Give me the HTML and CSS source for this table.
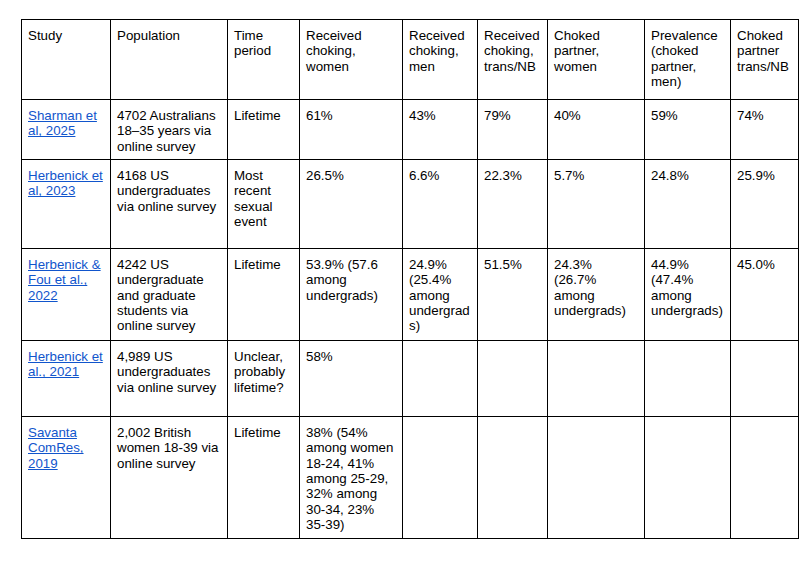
FILE: index.html
```html
<!DOCTYPE html>
<html lang="en">
<head>
<meta charset="utf-8">
<title>Choking prevalence studies</title>
<link rel="stylesheet" href="styles.css">
</head>
<body>
<div class="table">
  <div class="cell">Study</div>
  <div class="cell">Population</div>
  <div class="cell">Time period</div>
  <div class="cell">Received choking, women</div>
  <div class="cell">Received choking, men</div>
  <div class="cell">Received choking, trans/NB</div>
  <div class="cell">Choked partner, women</div>
  <div class="cell">Prevalence (choked partner, men)</div>
  <div class="cell">Choked partner trans/NB</div>

  <div class="cell"><a href="#">Sharman et al, 2025</a></div>
  <div class="cell">4702 Australians 18–35 years via online survey</div>
  <div class="cell">Lifetime</div>
  <div class="cell">61%</div>
  <div class="cell">43%</div>
  <div class="cell">79%</div>
  <div class="cell">40%</div>
  <div class="cell">59%</div>
  <div class="cell">74%</div>

  <div class="cell"><a href="#">Herbenick et al, 2023</a></div>
  <div class="cell">4168 US undergraduates via online survey</div>
  <div class="cell">Most recent sexual event</div>
  <div class="cell">26.5%</div>
  <div class="cell">6.6%</div>
  <div class="cell">22.3%</div>
  <div class="cell">5.7%</div>
  <div class="cell">24.8%</div>
  <div class="cell">25.9%</div>

  <div class="cell"><a href="#">Herbenick &amp; Fou et al., 2022</a></div>
  <div class="cell">4242 US undergraduate and graduate students via online survey</div>
  <div class="cell">Lifetime</div>
  <div class="cell">53.9% (57.6 among undergrads)</div>
  <div class="cell">24.9% (25.4% among undergrads)</div>
  <div class="cell">51.5%</div>
  <div class="cell">24.3% (26.7% among undergrads)</div>
  <div class="cell">44.9% (47.4% among undergrads)</div>
  <div class="cell">45.0%</div>

  <div class="cell"><a href="#">Herbenick et al., 2021</a></div>
  <div class="cell">4,989 US undergraduates via online survey</div>
  <div class="cell">Unclear, probably lifetime?</div>
  <div class="cell">58%</div>
  <div class="cell"></div>
  <div class="cell"></div>
  <div class="cell"></div>
  <div class="cell"></div>
  <div class="cell"></div>

  <div class="cell"><a href="#">Savanta ComRes, 2019</a></div>
  <div class="cell">2,002 British women 18-39 via online survey</div>
  <div class="cell">Lifetime</div>
  <div class="cell">38% (54% among women 18-24, 41% among 25-29, 32% among 30-34, 23% 35-39)</div>
  <div class="cell"></div>
  <div class="cell"></div>
  <div class="cell"></div>
  <div class="cell"></div>
  <div class="cell"></div>
</div>
</body>
</html>
```

FILE: styles.css
```css
html, body {
  margin: 0;
  padding: 0;
  background: #ffffff;
}

body {
  font-family: "Liberation Sans", Arial, sans-serif;
  font-size: 13.333px;
  line-height: 1.15;
  color: #000000;
}

.table {
  display: grid;
  grid-template-columns: 88px 116px 71px 102px 74px 69px 96px 85px 67px;
  grid-template-rows: 79px 59px 88px 91px 75px 121px;
  gap: 1px;
  padding: 1px;
  background: #000000;
  width: max-content;
  margin: 19px 0 0 21px;
}

.cell {
  background: #ffffff;
  padding: 8px 6.5px 0 6px;
  overflow-wrap: break-word;
  min-width: 0;
}

.cell a {
  color: #1155cc;
  text-decoration: underline;
}
```
